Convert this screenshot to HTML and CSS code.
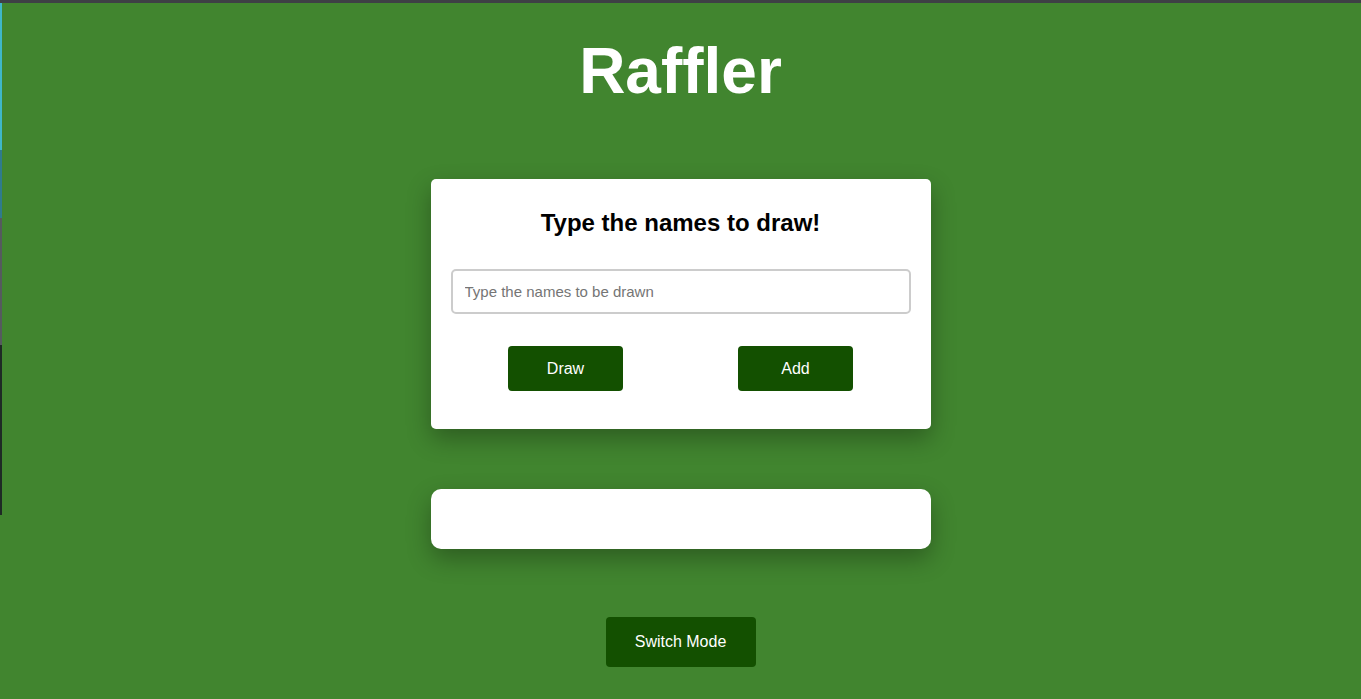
FILE: index.html
```html
<!DOCTYPE html>
<html lang="en">
<head>
<meta charset="utf-8">
<title>Raffler</title>
<link rel="stylesheet" href="styles.css">
</head>
<body>
<div class="edge"></div>
<main class="page">
  <h1 class="title">Raffler</h1>
  <section class="card">
    <h2 class="card-title">Type the names to draw!</h2>
    <input class="names-input" type="text" placeholder="Type the names to be drawn">
    <div class="actions">
      <button class="btn btn-small">Draw</button>
      <button class="btn btn-small">Add</button>
    </div>
  </section>
  <section class="result"></section>
  <button class="btn btn-switch">Switch Mode</button>
</main>
</body>
</html>
```
FILE: styles.css
```css
html, body {
  margin: 0;
  padding: 0;
}
body {
  background: #41852f;
  border-top: 3px solid #3e3f45;
  min-height: 696px;
  font-family: "Liberation Sans", Arial, sans-serif;
  position: relative;
  overflow: hidden;
}
.edge {
  position: absolute;
  left: 0;
  top: 0;
  width: 2px;
  height: 696px;
  background: linear-gradient(to bottom,
    #3fb7c9 0, #3fb7c9 147px,
    #2f7b8c 147px, #2f7b8c 215px,
    #555a5e 215px, #555a5e 342px,
    #1e2a25 342px, #1e2a25 512px,
    #41852f 512px);
}
.page {
  display: flex;
  flex-direction: column;
  align-items: center;
}
.title {
  margin: 31px 0 71px;
  font-size: 64px;
  line-height: 74px;
  font-weight: bold;
  color: #ffffff;
}
.card {
  width: 500px;
  box-sizing: border-box;
  background: #ffffff;
  border-radius: 5px;
  padding: 30px 20px 38px;
  box-shadow: 0 10px 25px rgba(0, 0, 0, 0.3);
  display: flex;
  flex-direction: column;
}
.card-title {
  margin: 0 0 32px;
  text-align: center;
  font-size: 24px;
  line-height: 28px;
  font-weight: bold;
  color: #000000;
}
.names-input {
  box-sizing: border-box;
  width: 100%;
  height: 45px;
  border: 2px solid #cccccc;
  border-radius: 5px;
  padding: 0 12px;
  font-family: "Liberation Sans", Arial, sans-serif;
  font-size: 15px;
  color: #333;
  outline: none;
}
.names-input::placeholder {
  color: #757575;
}
.actions {
  margin-top: 32px;
  display: flex;
  justify-content: space-around;
}
.btn {
  border: none;
  background: #135000;
  color: #ffffff;
  font-family: "Liberation Sans", Arial, sans-serif;
  font-size: 16px;
  border-radius: 4px;
  cursor: pointer;
  padding: 0;
}
.btn-small {
  width: 115px;
  height: 45px;
}
.result {
  margin-top: 60px;
  width: 500px;
  height: 60px;
  background: #ffffff;
  border-radius: 10px;
  box-shadow: 0 10px 25px rgba(0, 0, 0, 0.3);
}
.btn-switch {
  margin-top: 68px;
  width: 150px;
  height: 50px;
}
```
